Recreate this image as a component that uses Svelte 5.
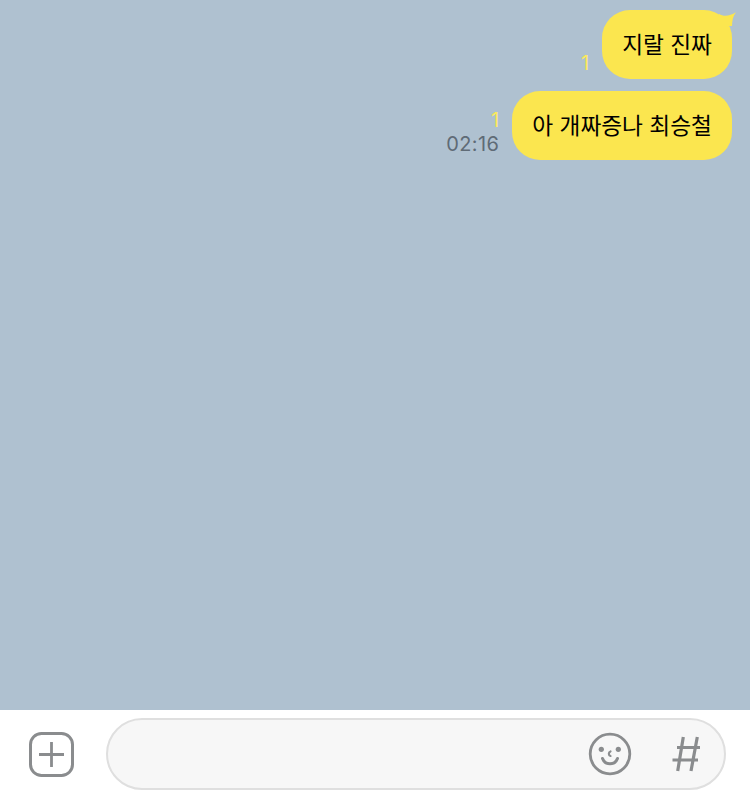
<script>
  const messages = [
    { text: '지랄 진짜', unread: 1, time: '', tail: true },
    { text: '아 개짜증나 최승철', unread: 1, time: '02:16', tail: false }
  ];
</script>

<div class="screen">
  <main class="chat">
    {#each messages as m}
      <div class="row">
        <div class="meta">
          <span class="unread">{m.unread}</span>
          {#if m.time}<span class="time">{m.time}</span>{/if}
        </div>
        <div class="bubble">
          {m.text}
          {#if m.tail}
            <svg class="tail" width="20" height="16" viewBox="0 0 20 16">
              <path d="M2 4C7 7 13 6 19 2.300C16 6 15 11 15 16H2Z" fill="#fbe64f" />
            </svg>
          {/if}
        </div>
      </div>
    {/each}
  </main>

  <footer class="composer">
    <button class="plus" aria-label="add">
      <svg width="45" height="45" viewBox="0 0 45 45" fill="none" stroke="#8a8c8e">
        <rect x="1.500" y="1.500" width="42" height="42" rx="11" stroke-width="3" />
        <path d="M10 22.500H35M22.500 10V35" stroke-width="2.800" />
      </svg>
    </button>
    <div class="input">
      <svg width="44" height="44" viewBox="0 0 44 44" fill="none" stroke="#8a8c8e">
        <circle cx="22" cy="22" r="19.800" stroke-width="2.800" />
        <circle cx="13.300" cy="17.300" r="2.600" fill="#8a8c8e" stroke="none" />
        <circle cx="30.300" cy="17.300" r="2.600" fill="#8a8c8e" stroke="none" />
        <path d="M14.500 26.500C17 33.500 27 33.500 29.500 26.500" stroke-width="3" stroke-linecap="round" />
        <path d="M22.500 19.500C20.300 20.300 20.300 23.500 22.500 24" stroke-width="2.200" stroke-linecap="round" />
      </svg>
      <svg class="hash" width="30" height="36" viewBox="0 0 30 36" fill="none" stroke="#8a8c8e" stroke-width="3.200">
        <path d="M12.300 1L6.700 35M26.300 1L20 35M6 11.500H29M1.500 24H27" />
      </svg>
    </div>
  </footer>
</div>

<style>
  :global(body) { margin: 0; background: #fff; }

  .screen {
    width: 750px;
    height: 798px;
    display: flex;
    flex-direction: column;
    font-family: Inter, "Noto Sans CJK KR", sans-serif;
  }

  .chat {
    flex: 1;
    background: #afc1d0;
    padding: 10px 18px 0 0;
    display: flex;
    flex-direction: column;
    gap: 12px;
  }

  .row { display: flex; justify-content: flex-end; align-items: flex-end; gap: 13px; }

  .meta {
    display: flex;
    flex-direction: column;
    align-items: flex-end;
    padding-bottom: 4px;
    line-height: 24px;
  }
  .unread { font-size: 20px; color: #fbe95f; }
  .time { font-size: 20px; color: #5f6b76; letter-spacing: 0.4px; }

  .bubble {
    position: relative;
    height: 69px;
    box-sizing: border-box;
    padding: 0 20px 3px 20px;
    display: flex;
    align-items: center;
    border-radius: 28px;
    background: #fbe64f;
    color: #000;
    font-size: 22.7px;
  }
  .tail { position: absolute; top: 0; right: -5px; }

  .composer {
    height: 88px;
    background: #fff;
    display: flex;
    align-items: center;
    padding: 0 24px 0 29px;
    gap: 32px;
    box-sizing: border-box;
  }

  .plus { all: unset; display: flex; }

  .input {
    flex: 1;
    height: 72px;
    box-sizing: border-box;
    border: 2px solid #dfdfdf;
    border-radius: 36px;
    background: #f7f7f7;
    display: flex;
    align-items: center;
    justify-content: flex-end;
    padding-right: 23px;
    gap: 39px;
  }
</style>
